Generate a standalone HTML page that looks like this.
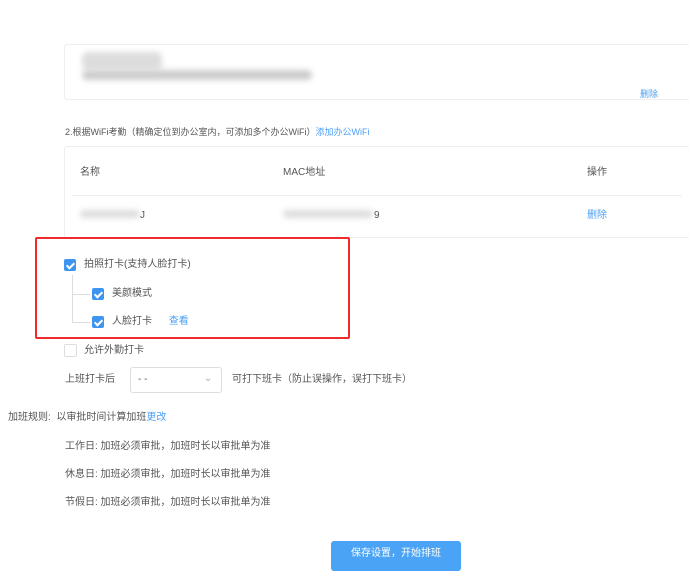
<!DOCTYPE html>
<html><head><meta charset="utf-8"><style>
body{margin:0;width:689px;height:564px;background:#fff;font-family:"Liberation Sans","Noto Sans CJK SC",sans-serif;font-size:10px;color:#555;position:relative;overflow:hidden}
.a{position:absolute;white-space:nowrap;line-height:12px}
.blue{color:#4a9ff5}
.box{position:absolute;border:1px solid #eee;border-radius:3px}
.cb{position:absolute;width:12px;height:12px;border-radius:2px;background:#3d95f0}
.cb:after{content:"";position:absolute;left:4px;top:1.5px;width:3px;height:6px;border:solid #fff;border-width:0 2px 2px 0;transform:rotate(45deg)}
.blur{position:absolute;background:#ddd;filter:blur(3px);border-radius:6px}
</style></head><body>
<div class="box" style="left:64px;top:44px;width:624px;height:54px"></div>
<div class="blur" style="left:82px;top:52px;width:80px;height:18px"></div>
<div class="blur" style="left:82px;top:70px;width:230px;height:10px;background:#ccc"></div>
<div class="a blue" style="left:640px;top:88px;font-size:9px">删除</div>
<div class="a" style="left:65px;top:126px;font-size:9px">2.根据WiFi考勤（精确定位到办公室内，可添加多个办公WiFi）<span class="blue">添加办公WiFi</span></div>
<div class="box" style="left:64px;top:146px;width:624px;height:90px"></div>
<div style="position:absolute;left:72px;top:195px;width:610px;height:1px;background:#eee"></div>
<div class="a" style="left:80px;top:167px">名称</div>
<div class="a" style="left:283px;top:167px">MAC地址</div>
<div class="a" style="left:587px;top:167px">操作</div>
<div class="blur" style="left:80px;top:210px;width:60px;height:8px"></div>
<div class="a" style="left:140px;top:210px">J</div>
<div class="blur" style="left:283px;top:210px;width:90px;height:8px"></div>
<div class="a" style="left:374px;top:210px">9</div>
<div class="a blue" style="left:587px;top:210px">删除</div>
<div style="position:absolute;left:35px;top:237px;width:311px;height:98px;border:2px solid #ee2a2a;border-radius:2px"></div>
<div class="cb" style="left:64px;top:259px"></div>
<div class="a" style="left:84px;top:259px">拍照打卡(支持人脸打卡)</div>
<div style="position:absolute;left:72px;top:275px;width:20px;height:48px;border-left:1px solid #ddd"></div>
<div style="position:absolute;left:72px;top:294px;width:18px;height:1px;background:#ddd"></div>
<div style="position:absolute;left:72px;top:322px;width:18px;height:1px;background:#ddd"></div>
<div class="cb" style="left:92px;top:288px"></div>
<div class="a" style="left:112px;top:288px">美颜模式</div>
<div class="cb" style="left:92px;top:316px"></div>
<div class="a" style="left:112px;top:316px">人脸打卡 <span class="blue" style="margin-left:14px">查看</span></div>
<div style="position:absolute;left:64px;top:344px;width:11px;height:11px;border:1px solid #ddd;border-radius:2px"></div>
<div class="a" style="left:84px;top:345px">允许外勤打卡</div>
<div class="a" style="left:65px;top:374px">上班打卡后</div>
<div style="position:absolute;left:130px;top:367px;width:90px;height:24px;border:1px solid #ddd;border-radius:3px"></div>
<div class="a" style="left:138px;top:374px">- -</div>
<div class="a" style="left:204px;top:373px;color:#aaa">⌄</div>
<div class="a" style="left:232px;top:374px">可打下班卡（防止误操作，误打下班卡）</div>
<div class="a" style="left:8px;top:412px">加班规则: &nbsp;以审批时间计算加班<span class="blue">更改</span></div>
<div class="a" style="left:65px;top:441px">工作日: 加班必须审批，加班时长以审批单为准</div>
<div class="a" style="left:65px;top:469px">休息日: 加班必须审批，加班时长以审批单为准</div>
<div class="a" style="left:65px;top:497px">节假日: 加班必须审批，加班时长以审批单为准</div>
<div style="position:absolute;left:331px;top:541px;width:130px;height:30px;background:#4aa3f5;border-radius:3px;color:#fff;text-align:center;line-height:26px">保存设置，开始排班</div>
</body></html>
